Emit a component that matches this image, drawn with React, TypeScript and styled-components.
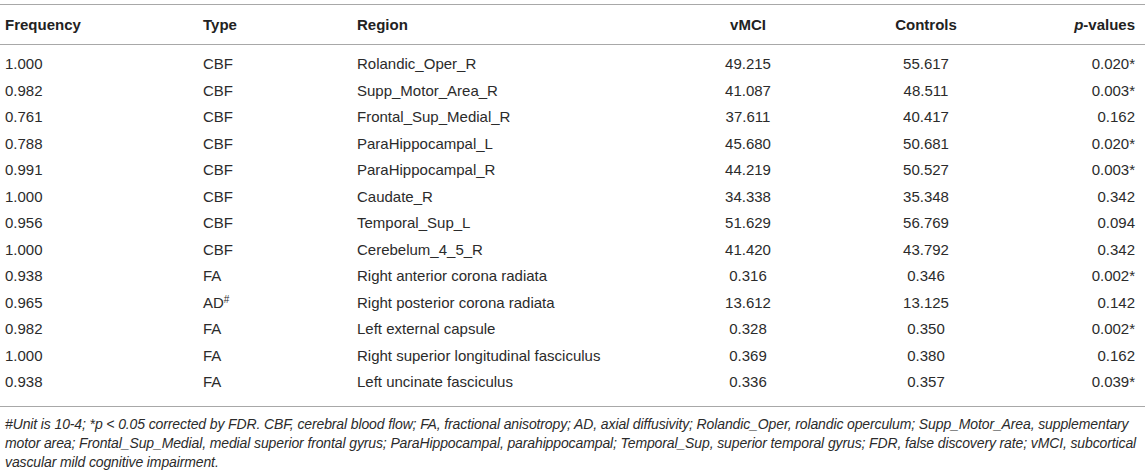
import React from "react";
import styled, { createGlobalStyle } from "styled-components";

const Global = createGlobalStyle`
  html, body { margin: 0; padding: 0; background: #ffffff; }
  body { font-family: "Liberation Sans", Arial, Helvetica, sans-serif; color: #2b2b2b; }
`;

const Page = styled.div`
  width: 1145px;
  padding-top: 4px;
  box-sizing: border-box;
`;

const Table = styled.table`
  width: 1145px;
  border-collapse: collapse;
  table-layout: fixed;
  font-size: 15px;
  line-height: 18px;
`;

type Align = "left" | "center" | "right";

const HeadCell = styled.th<{ $align: Align }>`
  text-align: ${(p) => p.$align};
  font-weight: 700;
  padding: 11px ${(p) => (p.$align === "right" ? "10px" : "5px")} 10px 5px;
  border-top: 1px solid #a8a8a8;
  border-bottom: 1px solid #a8a8a8;
  color: #222;
`;

const Cell = styled.td<{ $align: Align; $first?: boolean; $last?: boolean }>`
  text-align: ${(p) => p.$align};
  padding: ${(p) => (p.$first ? "10px" : "4px")} ${(p) => (p.$align === "right" ? "10px" : "5px")}
    ${(p) => (p.$last ? "15px" : "4.5px")} 5px;
  color: #2b2b2b;
  white-space: nowrap;
`;

const BottomRow = styled.tr`
  border-bottom: 1px solid #a8a8a8;
`;

const Sup = styled.sup`
  font-size: 10px;
  line-height: 0;
  vertical-align: 5px;
`;

const Footnote = styled.p`
  margin: 0;
  padding: 8px 8px 0 5px;
  font-size: 14px;
  line-height: 19px;
  font-style: italic;
  letter-spacing: -0.12px;
  color: #2b2b2b;
  white-space: nowrap;
`;

type Row = [string, string, string, string, string, string];

const rows: Row[] = [
  ["1.000", "CBF", "Rolandic_Oper_R", "49.215", "55.617", "0.020*"],
  ["0.982", "CBF", "Supp_Motor_Area_R", "41.087", "48.511", "0.003*"],
  ["0.761", "CBF", "Frontal_Sup_Medial_R", "37.611", "40.417", "0.162"],
  ["0.788", "CBF", "ParaHippocampal_L", "45.680", "50.681", "0.020*"],
  ["0.991", "CBF", "ParaHippocampal_R", "44.219", "50.527", "0.003*"],
  ["1.000", "CBF", "Caudate_R", "34.338", "35.348", "0.342"],
  ["0.956", "CBF", "Temporal_Sup_L", "51.629", "56.769", "0.094"],
  ["1.000", "CBF", "Cerebelum_4_5_R", "41.420", "43.792", "0.342"],
  ["0.938", "FA", "Right anterior corona radiata", "0.316", "0.346", "0.002*"],
  ["0.965", "AD#", "Right posterior corona radiata", "13.612", "13.125", "0.142"],
  ["0.982", "FA", "Left external capsule", "0.328", "0.350", "0.002*"],
  ["1.000", "FA", "Right superior longitudinal fasciculus", "0.369", "0.380", "0.162"],
  ["0.938", "FA", "Left uncinate fasciculus", "0.336", "0.357", "0.039*"],
];

const aligns: Align[] = ["left", "left", "left", "center", "center", "right"];
const widths = [198, 154, 298, 196, 160, 139];

function renderType(t: string) {
  if (t.endsWith("#")) {
    return (
      <>
        {t.slice(0, -1)}
        <Sup>#</Sup>
      </>
    );
  }
  return t;
}

export default function App() {
  return (
    <Page>
      <Global />
      <Table>
        <colgroup>
          {widths.map((w, i) => (
            <col key={i} style={{ width: w }} />
          ))}
        </colgroup>
        <thead>
          <tr>
            <HeadCell $align="left">Frequency</HeadCell>
            <HeadCell $align="left">Type</HeadCell>
            <HeadCell $align="left">Region</HeadCell>
            <HeadCell $align="center">vMCI</HeadCell>
            <HeadCell $align="center">Controls</HeadCell>
            <HeadCell $align="right">
              <i>p</i>-values
            </HeadCell>
          </tr>
        </thead>
        <tbody>
          {rows.map((r, ri) => {
            const first = ri === 0;
            const last = ri === rows.length - 1;
            const cells = r.map((c, ci) => (
              <Cell key={ci} $align={aligns[ci]} $first={first} $last={last}>
                {ci === 1 ? renderType(c) : c}
              </Cell>
            ));
            return last ? <BottomRow key={ri}>{cells}</BottomRow> : <tr key={ri}>{cells}</tr>;
          })}
        </tbody>
      </Table>
      <Footnote>
        #Unit is 10-4; *p &lt; 0.05 corrected by FDR. CBF, cerebral blood flow; FA, fractional anisotropy; AD, axial
        diffusivity; Rolandic_Oper, rolandic operculum; Supp_Motor_Area, supplementary
        <br />
        motor area; Frontal_Sup_Medial, medial superior frontal gyrus; ParaHippocampal, parahippocampal; Temporal_Sup,
        superior temporal gyrus; FDR, false discovery rate; vMCI, subcortical
        <br />
        vascular mild cognitive impairment.
      </Footnote>
    </Page>
  );
}
